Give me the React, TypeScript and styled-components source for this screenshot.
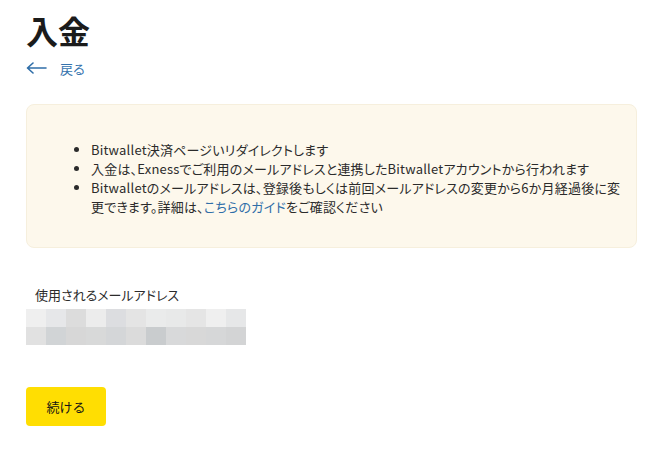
import styled, { createGlobalStyle } from 'styled-components'

const GlobalStyle = createGlobalStyle`
  html, body {
    margin: 0;
    padding: 0;
    background: #fff;
  }
  body {
    font-family: 'Noto Sans CJK JP', 'Noto Sans', sans-serif;
    font-feature-settings: 'palt';
    color: #2b2b2b;
  }
`

const Page = styled.div({
  display: 'flex',
  flexDirection: 'column',
  alignItems: 'flex-start',
  padding: '12px 26px 20px',
  width: 611,
})

const Title = styled.h1({
  margin: 0,
  fontSize: 32,
  lineHeight: '37px',
  fontWeight: 700,
  color: '#1b1b1b',
  letterSpacing: 0,
})

const BackLink = styled.a({
  display: 'flex',
  alignItems: 'center',
  gap: 13,
  marginTop: 9,
  height: 20,
  fontSize: 13,
  color: '#3473ad',
  textDecoration: 'none',
  cursor: 'pointer',
})

const Notice = styled.div({
  boxSizing: 'border-box',
  marginTop: 26,
  width: 611,
  height: 144,
  padding: '35px 8px 0 26px',
  background: '#fdf8ec',
  border: '1px solid #f6efdd',
  borderRadius: 8,
})

const List = styled.ul({
  margin: 0,
  paddingLeft: 38,
  fontSize: 13,
  lineHeight: '19px',
  letterSpacing: '0.2px',
  color: '#2b2b2b',
})

const Guide = styled.a({
  color: '#2f6ea8',
  textDecoration: 'none',
})

const Label = styled.div({
  marginTop: 37,
  paddingLeft: 9,
  fontSize: 13,
  lineHeight: '19px',
  color: '#2b2b2b',
})

const Mosaic = styled.div({
  marginTop: 5,
  display: 'grid',
  gridTemplateColumns: 'repeat(11, 20px)',
  gridAutoRows: 18,
})

const Cell = styled.div<{ $color: string }>(({ $color }) => ({
  background: $color,
}))

const Button = styled.button({
  marginTop: 42,
  width: 80,
  height: 39,
  border: 'none',
  borderRadius: 4,
  background: '#ffde02',
  fontFamily: 'inherit',
  fontFeatureSettings: 'palt',
  fontSize: 13,
  color: '#141414',
  cursor: 'pointer',
})

const blurred = [
  '#efefef', '#e6e7e9', '#dcdcdc', '#ececec', '#dcdde0', '#e4e4e4',
  '#eaebeb', '#e8e9e9', '#e5e5e5', '#efefef', '#e6e7e8',
  '#e1e1e1', '#d1d4d6', '#d7d7d7', '#d8d9d9', '#d4d6d8', '#dbdbdb',
  '#c9ccce', '#d8d9da', '#d8d8d8', '#d6d7d8', '#d3d4d5',
]

function App() {
  return (
    <>
      <GlobalStyle />
      <Page>
        <Title>入金</Title>
        <BackLink>
          <svg width="21" height="12" viewBox="0 0 21 12" fill="none">
            <path
              d="M20 6H2M7 1L1.5 6L7 11"
              stroke="#2f6ea8"
              strokeWidth="1.6"
              strokeLinecap="round"
              strokeLinejoin="round"
            />
          </svg>
          <span>戻る</span>
        </BackLink>
        <Notice>
          <List>
            <li>Bitwallet決済ページいリダイレクトします</li>
            <li>入金は、Exnessでご利用のメールアドレスと連携したBitwalletアカウントから行われます</li>
            <li>
              Bitwalletのメールアドレスは、登録後もしくは前回メールアドレスの変更から6か月経過後に変更できます。詳細は、
              <Guide>こちらのガイド</Guide>をご確認ください
            </li>
          </List>
        </Notice>
        <Label>使用されるメールアドレス</Label>
        <Mosaic>
          {blurred.map((c, i) => (
            <Cell key={i} $color={c} />
          ))}
        </Mosaic>
        <Button>続ける</Button>
      </Page>
    </>
  )
}

export default App
